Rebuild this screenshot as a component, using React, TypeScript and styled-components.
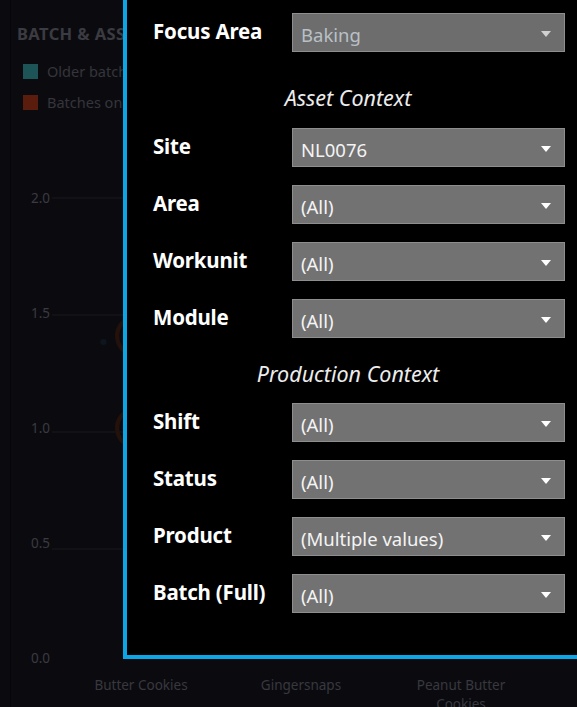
import styled, { createGlobalStyle } from "styled-components";

interface IFilter {
  label: string;
  value: string;
  disabled?: boolean;
}

const assetFilters: IFilter[] = [
  { label: "Site", value: "NL0076" },
  { label: "Area", value: "(All)" },
  { label: "Workunit", value: "(All)" },
  { label: "Module", value: "(All)" },
];

const productionFilters: IFilter[] = [
  { label: "Shift", value: "(All)" },
  { label: "Status", value: "(All)" },
  { label: "Product", value: "(Multiple values)" },
  { label: "Batch (Full)", value: "(All)" },
];

const yTicks = ["2.0", "1.5", "1.0", "0.5", "0.0"];
const xTicks = ["Butter Cookies", "Gingersnaps", "Peanut Butter Cookies", "S"];

const GlobalStyle = createGlobalStyle`
  html, body {
    margin: 0;
    padding: 0;
    background: #0b0b0f;
    overflow: hidden;
  }
  * {
    box-sizing: border-box;
  }
`;

const Page = styled.div`
  position: relative;
  width: 577px;
  height: 707px;
  overflow: hidden;
  background: #0b0b0f;
  font-family: "Noto Sans", "Open Sans", sans-serif;
`;

/* dashboard chart sitting behind the filter popup */
const ChartCard = styled.div`
  display: flex;
  flex-direction: column;
  height: 100%;
  margin-left: 10px;
  border-left: 1px solid #060608;
  padding: 22px 0 0 6px;
`;

const ChartTitle = styled.div`
  font-size: 16.5px;
  font-weight: 700;
  color: #3b3b42;
  letter-spacing: 0.4px;
  white-space: nowrap;
`;

const Legend = styled.div`
  display: flex;
  flex-direction: column;
  gap: 11px;
  margin: 16px 0 0 6px;
`;

const LegendItem = styled.div`
  display: flex;
  align-items: center;
  gap: 9px;
  font-size: 14.5px;
  color: #35353b;
  white-space: nowrap;
`;

const Swatch = styled.span<{ $color: string }>`
  width: 15px;
  height: 15px;
  background: ${(p) => p.$color};
`;

const PlotArea = styled.div`
  display: grid;
  grid-template-columns: 35px 1fr;
  margin-top: 78px;
  height: 476px;
`;

const YAxis = styled.div`
  display: flex;
  flex-direction: column;
  justify-content: space-between;
  font-size: 13.5px;
  color: #3a3a41;
  text-align: right;
  padding-right: 2px;
`;

const Tick = styled.div`
  line-height: 16px;
  height: 16px;
`;

const Plot = styled.svg`
  width: 100%;
  height: 100%;
  display: block;
`;

const XAxis = styled.div`
  display: grid;
  grid-template-columns: repeat(4, 160px);
  margin: 10px 0 0 44px;
`;

const XLabel = styled.div`
  font-size: 13.5px;
  line-height: 19px;
  color: #38383f;
  text-align: center;
  padding: 0 28px;
`;

/* filter popup */
const Panel = styled.div`
  position: absolute;
  left: 123px;
  top: -20px;
  width: 480px;
  background: #000;
  border: 4px solid #0aa6e6;
  padding: 29px 30px 42px 26px;
  display: flex;
  flex-direction: column;
`;

const Row = styled.div<{ $gap?: number }>`
  display: grid;
  grid-template-columns: 139px 273px;
  align-items: center;
  margin-top: ${(p) => p.$gap ?? 18}px;
`;

const Label = styled.div`
  font-size: 20.5px;
  font-weight: 700;
  color: #fff;
  white-space: nowrap;
  letter-spacing: -0.2px;
  margin-top: -4px;
`;

const Dropdown = styled.div<{ $disabled?: boolean }>`
  height: 39px;
  display: flex;
  align-items: center;
  justify-content: space-between;
  padding: 3px 13px 0 8px;
  background: ${(p) => (p.$disabled ? "#6d6d6d" : "#727272")};
  border: 1px solid #8e8e8e;
  font-size: 18.5px;
  color: ${(p) => (p.$disabled ? "#b9c0c6" : "#f4f4f4")};
  white-space: nowrap;
`;

const Caret = styled.span<{ $disabled?: boolean }>`
  width: 0;
  height: 0;
  border-left: 5px solid transparent;
  border-right: 5px solid transparent;
  border-top: 6px solid ${(p) => (p.$disabled ? "#d0d0d0" : "#fff")};
`;

const SectionTitle = styled.div<{ $top: number; $bottom: number }>`
  padding: ${(p) => p.$top}px 0 ${(p) => p.$bottom}px;
  text-align: center;
  font-size: 21.5px;
  font-style: italic;
  line-height: 24px;
  color: #ececec;
  margin-left: -26px;
`;

function FilterRow({ label, value, disabled, gap }: IFilter & { gap?: number }) {
  return (
    <Row $gap={gap}>
      <Label>{label}</Label>
      <Dropdown $disabled={disabled}>
        <span>{value}</span>
        <Caret $disabled={disabled} />
      </Dropdown>
    </Row>
  );
}

function Chart() {
  return (
    <ChartCard>
      <ChartTitle>BATCH &amp; ASSET OVERVIEW</ChartTitle>
      <Legend>
        <LegendItem>
          <Swatch $color="#1c5457" />
          Older batches
        </LegendItem>
        <LegendItem>
          <Swatch $color="#5a1c0c" />
          Batches on hold
        </LegendItem>
      </Legend>
      <PlotArea>
        <YAxis>
          {yTicks.map((t) => (
            <Tick key={t}>{t}</Tick>
          ))}
        </YAxis>
        <Plot viewBox="0 0 500 476" preserveAspectRatio="none">
          {[8, 125, 242, 359].map((y) => (
            <line key={y} x1="0" x2="500" y1={y} y2={y} stroke="#19191f" strokeWidth="1" />
          ))}
          <circle cx="82" cy="146" r="20" fill="none" stroke="#24120a" strokeWidth="4" />
          <circle cx="82" cy="238" r="20" fill="none" stroke="#24120a" strokeWidth="4" />
          <circle cx="49" cy="152" r="3" fill="#0d151d" />
        </Plot>
      </PlotArea>
      <XAxis>
        {xTicks.map((t) => (
          <XLabel key={t}>{t}</XLabel>
        ))}
      </XAxis>
    </ChartCard>
  );
}

export default function App() {
  return (
    <Page>
      <GlobalStyle />
      <Chart />
      <Panel>
        <FilterRow label="Focus Area" value="Baking" disabled gap={0} />
        <SectionTitle $top={34} $bottom={18}>Asset Context</SectionTitle>
        {assetFilters.map((f, i) => (
          <FilterRow key={f.label} {...f} gap={i === 0 ? 0 : 18} />
        ))}
        <SectionTitle $top={24} $bottom={17}>Production Context</SectionTitle>
        {productionFilters.map((f, i) => (
          <FilterRow key={f.label} {...f} gap={i === 0 ? 0 : 18} />
        ))}
      </Panel>
    </Page>
  );
}
